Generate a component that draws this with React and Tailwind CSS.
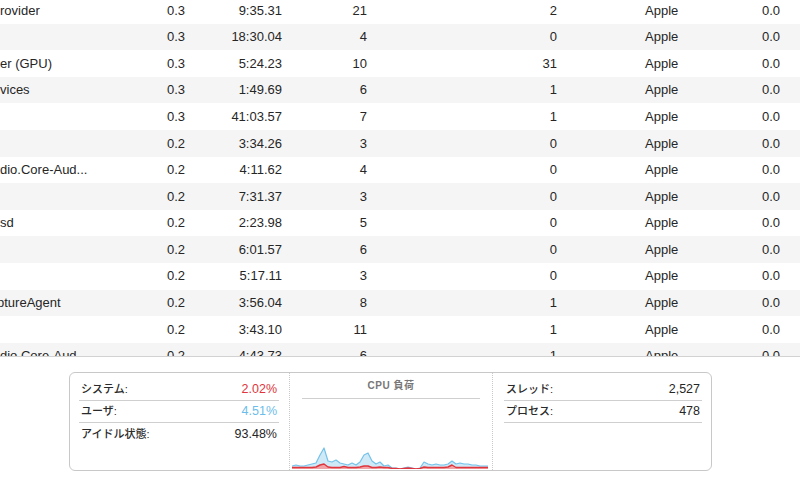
import React from 'react'

const rows = [
  ['rovider', '0.3', '9:35.31', '21', '2'],
  ['', '0.3', '18:30.04', '4', '0'],
  ['er (GPU)', '0.3', '5:24.23', '10', '31'],
  ['vices', '0.3', '1:49.69', '6', '1'],
  ['', '0.3', '41:03.57', '7', '1'],
  ['', '0.2', '3:34.26', '3', '0'],
  ['dio.Core-Aud...', '0.2', '4:11.62', '4', '0'],
  ['', '0.2', '7:31.37', '3', '0'],
  ['sd', '0.2', '2:23.98', '5', '0'],
  ['', '0.2', '6:01.57', '6', '0'],
  ['', '0.2', '5:17.11', '3', '0'],
  ['ptureAgent', '0.2', '3:56.04', '8', '1'],
  ['', '0.2', '3:43.10', '11', '1'],
  ['dio.Core-Aud...', '0.2', '4:43.73', '6', '1'],
]

// user + system load, in px above the baseline, one sample every 4px
const total = [3, 4, 3, 3, 4, 5, 6, 14, 21, 8, 7, 9, 6, 5, 4, 6, 4, 7, 14, 16, 8, 5, 7, 3, 4, 1, 1, 0, 1, 2, 1, 0, 1, 7, 5, 4, 5, 4, 4, 5, 8, 5, 6, 5, 5, 4, 4, 3, 3, 3]
const system = [1.5, 1.5, 1.5, 1.5, 1.5, 1.5, 2, 4, 5, 2, 1.5, 1.5, 1.5, 2.5, 1.5, 1.5, 1.5, 2, 3, 3, 1.5, 1.5, 2, 1.5, 1.5, 0.5, 0.5, 0, 0.5, 1, 0.5, 0, 0.5, 2, 1.5, 1.5, 1.5, 1.5, 1.5, 2, 4, 1.5, 1.5, 1.5, 1.5, 1.5, 1.5, 1.5, 1.5, 1.5]

const H = 30

const area = (vals) => {
  const pts = vals.map((v, i) => `${(i * 4).toFixed(1)},${(H - v).toFixed(1)}`)
  return {
    line: 'M' + pts.join(' L'),
    fill: `M0,${H} L` + pts.join(' L') + ` L${(vals.length - 1) * 4},${H} Z`,
  }
}

const LoadChart = () => {
  const u = area(total)
  const s = area(system)
  return (
    <svg width="197" height={H} viewBox={`0 0 197 ${H}`} className="block">
      <path d={u.fill} fill="#cfe9f7" />
      <path d={u.line} fill="none" stroke="#74c2ea" strokeWidth="1.2" strokeLinejoin="round" />
      <path d={s.fill} fill="#f0a3a6" />
      <path d={s.line} fill="none" stroke="#e0353c" strokeWidth="1.4" strokeLinejoin="round" />
    </svg>
  )
}

const StatRow = ({ label, value, valueClass = 'text-[#262626]', line = true }) => (
  <div className={`flex items-center justify-between h-[22px] px-[2px] ${line ? 'border-b border-[#cfcfcf]' : ''}`}>
    <span className="text-[11px] text-[#2a2a2a] font-medium">{label}</span>
    <span className={`text-[12.5px] ${valueClass}`}>{value}</span>
  </div>
)

export default function App() {
  return (
    <div
      className="w-[800px] h-[483px] bg-white overflow-hidden text-[#262626]"
      style={{ fontFamily: '"Liberation Sans", "Noto Sans CJK JP", sans-serif' }}
    >
      {/* process table */}
      <div className="h-[357px] overflow-hidden border-b border-[#d2d2d2]">
        <div className="mt-[-3px]">
          {rows.map((r, i) => (
            <div
              key={i}
              className={`grid grid-cols-[150px_35px_97px_85px_190px_188px_35px] h-[26.6px] items-center text-[13px] ${i % 2 ? 'bg-[#f5f5f5]' : 'bg-white'}`}
            >
              <span className={`whitespace-nowrap ${r[0] === 'ptureAgent' ? 'ml-[-3px]' : ''}`}>{r[0]}</span>
              <span className="text-right">{r[1]}</span>
              <span className="text-right">{r[2]}</span>
              <span className="text-right">{r[3]}</span>
              <span className="text-right">{r[4]}</span>
              <span className="pl-[88px]">Apple</span>
              <span className="text-right">0.0</span>
            </div>
          ))}
        </div>
      </div>

      {/* CPU summary panel */}
      <div className="ml-[69px] mt-[15px] w-[643px] h-[99px] border border-[#c8c8c8] rounded-[6px] flex">
        <div className="w-[219px] pl-[9px] pr-[10px] pt-[6px]">
          <StatRow label="システム:" value="2.02%" valueClass="text-[#e0353c]" />
          <StatRow label="ユーザ:" value="4.51%" valueClass="text-[#6cbde9]" />
          <StatRow label="アイドル状態:" value="93.48%" line={false} />
        </div>
        <div className="w-[204px] border-x border-dotted border-[#c9c9c9] flex flex-col">
          <div className="text-[10px] text-[#777] text-center font-semibold mt-[7px] leading-[12px] tracking-[0.5px]">CPU 負荷</div>
          <div className="mx-[12px] mt-[6px] border-b border-[#cfcfcf]" />
          <div className="flex-1 flex items-end pl-[2px] pb-[1px]">
            <LoadChart />
          </div>
        </div>
        <div className="flex-1 pl-[11px] pr-[9px] pt-[6px]">
          <StatRow label="スレッド:" value="2,527" />
          <StatRow label="プロセス:" value="478" />
        </div>
      </div>
    </div>
  )
}
